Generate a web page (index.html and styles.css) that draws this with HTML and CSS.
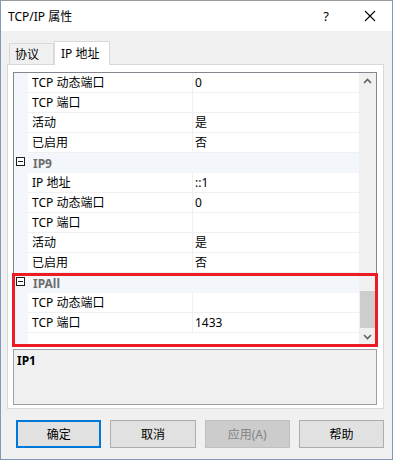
FILE: index.html
```html
<!DOCTYPE html>
<html lang="zh-CN">
<head>
    <meta charset="UTF-8">
    <title>TCP/IP 属性</title>
    <link rel="stylesheet" href="styles.css">
</head>
<body>
    <div class="window">
        <div class="titlebar">
            <span class="title">TCP/IP 属性</span>
            <span class="help">?</span>
            <svg class="close" width="12" height="12" viewBox="0 0 12 12">
                <path d="M1 1 L11 11 M11 1 L1 11" stroke="#000" stroke-width="1.1" fill="none"/>
            </svg>
        </div>
        <div class="content">
            <div class="tabs">
                <div class="tab">协议</div>
                <div class="tab active">IP 地址</div>
            </div>
            <div class="panel">
                <div class="grid">
                    <div class="rows">
                        <div class="row"><span class="name">TCP 动态端口</span><span class="value">0</span></div>
                        <div class="row"><span class="name">TCP 端口</span><span class="value"></span></div>
                        <div class="row"><span class="name">活动</span><span class="value">是</span></div>
                        <div class="row"><span class="name">已启用</span><span class="value">否</span></div>
                        <div class="category"><span class="toggle"></span><span class="cat-name">IP9</span></div>
                        <div class="row"><span class="name">IP 地址</span><span class="value">::1</span></div>
                        <div class="row"><span class="name">TCP 动态端口</span><span class="value">0</span></div>
                        <div class="row"><span class="name">TCP 端口</span><span class="value"></span></div>
                        <div class="row"><span class="name">活动</span><span class="value">是</span></div>
                        <div class="row"><span class="name">已启用</span><span class="value">否</span></div>
                        <div class="category"><span class="toggle"></span><span class="cat-name">IPAll</span></div>
                        <div class="row"><span class="name">TCP 动态端口</span><span class="value"></span></div>
                        <div class="row"><span class="name">TCP 端口</span><span class="value">1433</span></div>
                    </div>
                    <div class="scrollbar">
                        <svg class="arrow" width="17" height="17" viewBox="0 0 17 17">
                            <path d="M5 10 L8.5 6.5 L12 10" stroke="#606060" stroke-width="1.6" fill="none"/>
                        </svg>
                        <div class="track"><div class="thumb"></div></div>
                        <svg class="arrow" width="17" height="17" viewBox="0 0 17 17">
                            <path d="M5 7 L8.5 10.5 L12 7" stroke="#606060" stroke-width="1.6" fill="none"/>
                        </svg>
                    </div>
                    <div class="highlight"></div>
                </div>
                <div class="description">IP1</div>
            </div>
            <div class="buttons">
                <button class="btn default">确定</button>
                <button class="btn">取消</button>
                <button class="btn" disabled>应用(A)</button>
                <button class="btn">帮助</button>
            </div>
        </div>
    </div>
</body>
</html>
```

FILE: styles.css
```css
body {
    margin: 0;
    background: #ffffff;
    font-family: "Noto Sans", "Noto Sans CJK SC", sans-serif;
    font-size: 12px;
    color: #000;
}
.window {
    width: 393px;
    height: 460px;
    box-sizing: border-box;
    border: 1px solid #8198b8;
    border-top-color: #9a9a9a;
    display: flex;
    flex-direction: column;
}
.titlebar {
    height: 30px;
    background: #fff;
    display: flex;
    align-items: center;
    padding-left: 7px;
    flex-shrink: 0;
}
.title {
    flex: 1;
    font-size: 12px;
}
.help {
    font-size: 13px;
    margin-right: 35px;
}
.close {
    margin-right: 16px;
}
.content {
    flex: 1;
    background: #f0f0f0;
    padding: 10px 8px 0 6px;
}
.tabs {
    display: flex;
    align-items: flex-end;
    padding-left: 2px;
    height: 23px;
}
.tab {
    height: 21px;
    width: 45px;
    box-sizing: border-box;
    border: 1px solid #d9d9d9;
    border-bottom: none;
    background: #f0f0f0;
    padding-left: 5px;
    line-height: 21px;
}
.tab.active {
    height: 24px;
    width: 56px;
    background: #fff;
    padding-left: 6px;
    line-height: 24px;
    margin-bottom: -1px;
    position: relative;
    z-index: 1;
}
.panel {
    width: 377px;
    height: 345px;
    box-sizing: border-box;
    border: 1px solid #d9d9d9;
    background: #fff;
    padding: 7px 6px 3px 5px;
}
.grid {
    position: relative;
    height: 274px;
    box-sizing: border-box;
    border: 1px solid #828790;
    display: flex;
}
.rows {
    width: 345px;
    background: #fff;
}
.row {
    display: flex;
    height: 20px;
    box-sizing: border-box;
    border-bottom: 1px solid #f0f0f0;
    margin-left: 14px;
    line-height: 19px;
}
.name {
    width: 165px;
    padding-left: 4px;
    box-sizing: border-box;
    border-right: 1px solid #f0f0f0;
}
.value {
    padding-left: 2px;
}
.rows {
    background: linear-gradient(to right, #f3f6fb 14px, #fff 14px);
}
.category {
    height: 20px;
    background: #f3f6fb;
    display: flex;
    align-items: center;
}
.toggle {
    width: 9px;
    height: 9px;
    box-sizing: border-box;
    border: 1px solid #1e1e1e;
    margin-left: 2px;
    margin-top: -3px;
    position: relative;
    background: #fff;
}
.toggle::after {
    content: "";
    position: absolute;
    left: 1px;
    right: 1px;
    top: 3px;
    height: 1px;
    background: #1e1e1e;
}
.cat-name {
    margin-left: 8px;
    font-weight: bold;
    color: #6d6d6d;
}
.scrollbar {
    width: 17px;
    background: #f0f0f0;
    display: flex;
    flex-direction: column;
}
.arrow {
    display: block;
    flex-shrink: 0;
}
.track {
    flex: 1;
    display: flex;
    flex-direction: column;
    justify-content: flex-end;
}
.thumb {
    height: 37px;
    margin: 0 1px 0 1px;
    background: #cdcdcd;
}
.highlight {
    position: absolute;
    left: -2px;
    right: -2px;
    top: 200px;
    bottom: -2px;
    border: 3px solid #ec1c24;
}
.description {
    margin-top: 3px;
    height: 56px;
    box-sizing: border-box;
    border: 1px solid #a0a0a0;
    background: #f0f0f0;
    font-weight: bold;
    padding: 2px 3px;
}
.buttons {
    display: flex;
    gap: 9px;
    margin-top: 11px;
    padding-left: 9px;
}
.btn {
    width: 86px;
    height: 28px;
    background: #e1e1e1;
    border: 1px solid #adadad;
    font-family: "Noto Sans", "Noto Sans CJK SC", sans-serif;
    font-size: 12px;
    color: #000;
    padding: 0;
}
.btn.default {
    border: 2px solid #0078d7;
}
.btn:disabled {
    background: #cccccc;
    border-color: #bfbfbf;
    color: #838383;
}
```
